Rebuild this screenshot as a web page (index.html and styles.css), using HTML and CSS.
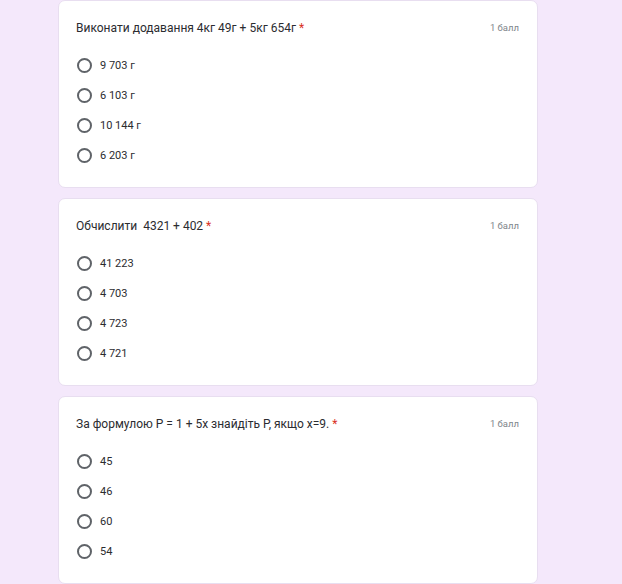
FILE: index.html
```html
<!DOCTYPE html>
<html lang="uk">
<head>
<meta charset="utf-8">
<link rel="stylesheet" href="styles.css">
</head>
<body>
<div class="page">
  <div class="card">
    <div class="head">
      <div class="title">Виконати додавання 4кг 49г + 5кг 654г <span class="req">*</span></div>
      <div class="points">1 балл</div>
    </div>
    <div class="options">
      <div class="opt"><span class="radio"></span><span class="label">9 703 г</span></div>
      <div class="opt"><span class="radio"></span><span class="label">6 103 г</span></div>
      <div class="opt"><span class="radio"></span><span class="label">10 144 г</span></div>
      <div class="opt"><span class="radio"></span><span class="label">6 203 г</span></div>
    </div>
  </div>
  <div class="card">
    <div class="head">
      <div class="title">Обчислити&nbsp; 4321 + 402 <span class="req">*</span></div>
      <div class="points">1 балл</div>
    </div>
    <div class="options">
      <div class="opt"><span class="radio"></span><span class="label">41 223</span></div>
      <div class="opt"><span class="radio"></span><span class="label">4 703</span></div>
      <div class="opt"><span class="radio"></span><span class="label">4 723</span></div>
      <div class="opt"><span class="radio"></span><span class="label">4 721</span></div>
    </div>
  </div>
  <div class="card">
    <div class="head">
      <div class="title">За формулою Р = 1 + 5х знайдіть Р, якщо х=9. <span class="req">*</span></div>
      <div class="points">1 балл</div>
    </div>
    <div class="options">
      <div class="opt"><span class="radio"></span><span class="label">45</span></div>
      <div class="opt"><span class="radio"></span><span class="label">46</span></div>
      <div class="opt"><span class="radio"></span><span class="label">60</span></div>
      <div class="opt"><span class="radio"></span><span class="label">54</span></div>
    </div>
  </div>
</div>
</body>
</html>
```

FILE: styles.css
```css
html, body {
  margin: 0;
  padding: 0;
  background: #f4e8fb;
  font-family: Roboto, "Liberation Sans", Arial, sans-serif;
  color: #202124;
}
.page {
  width: 480px;
  margin-left: 58px;
  display: flex;
  flex-direction: column;
  gap: 10px;
}
.card {
  box-sizing: border-box;
  height: 188px;
  background: #fff;
  border: 1px solid #e8def0;
  border-radius: 7px;
  padding: 17px 18px 0 17px;
}
.head {
  display: flex;
  justify-content: space-between;
  align-items: center;
  height: 20px;
}
.title {
  font-size: 12px;
  line-height: 20px;
  color: #2b2c30;
}
.req {
  color: #d93025;
}
.points {
  font-size: 9.5px;
  color: #80858a;
  line-height: 20px;
}
.options {
  margin-top: 12px;
  display: flex;
  flex-direction: column;
}
.opt {
  height: 30px;
  display: flex;
  align-items: center;
}
.radio {
  box-sizing: border-box;
  width: 15px;
  height: 15px;
  border: 2px solid #5f6368;
  border-radius: 50%;
  margin-left: 1px;
  margin-right: 8px;
}
.label {
  font-size: 11px;
  color: #2b2c30;
}
```
